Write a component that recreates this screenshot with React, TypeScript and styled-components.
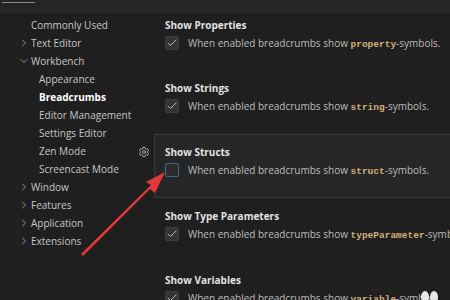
import React from "react";
import styled, { createGlobalStyle } from "styled-components";
import { ChevronRight, ChevronDown, Check, Settings } from "lucide-react";

const GlobalStyle = createGlobalStyle`
  html, body {
    margin: 0;
    padding: 0;
    background: #1e1e1e;
    overflow: hidden;
  }
  * { box-sizing: border-box; }
`;

interface TreeItem {
  label: string;
  depth: number;
  open?: boolean;
  leaf?: boolean;
  active?: boolean;
}

const tree: TreeItem[] = [
  { label: "Commonly Used", depth: 0, leaf: true },
  { label: "Text Editor", depth: 0 },
  { label: "Workbench", depth: 0, open: true },
  { label: "Appearance", depth: 1, leaf: true },
  { label: "Breadcrumbs", depth: 1, leaf: true, active: true },
  { label: "Editor Management", depth: 1, leaf: true },
  { label: "Settings Editor", depth: 1, leaf: true },
  { label: "Zen Mode", depth: 1, leaf: true },
  { label: "Screencast Mode", depth: 1, leaf: true },
  { label: "Window", depth: 0 },
  { label: "Features", depth: 0 },
  { label: "Application", depth: 0 },
  { label: "Extensions", depth: 0 },
];

interface Setting {
  title: string;
  symbol: string;
  checked: boolean;
}

const settings: Setting[] = [
  { title: "Show Properties", symbol: "property", checked: true },
  { title: "Show Strings", symbol: "string", checked: true },
  { title: "Show Structs", symbol: "struct", checked: false },
  { title: "Show Type Parameters", symbol: "typeParameter", checked: true },
  { title: "Show Variables", symbol: "variable", checked: true },
];

const App: React.FC = () => {
  return (
    <Page>
      <GlobalStyle />
      <TopBar>
        <TabLine />
      </TopBar>
      <Main>
        <Sidebar>
          {tree.map((item) => (
            <TreeRow key={item.label} depth={item.depth} active={item.active}>
              <Twistie>
                {item.leaf ? null : item.open ? (
                  <ChevronDown size={12} strokeWidth={1.5} />
                ) : (
                  <ChevronRight size={12} strokeWidth={1.5} />
                )}
              </Twistie>
              {item.label}
            </TreeRow>
          ))}
        </Sidebar>
        <Content>
          {settings.map((s, index) => {
            const selected = s.title === "Show Structs";
            return (
              <Section key={s.title} first={index === 0}>
                <Gutter>{selected && <Settings size={12} strokeWidth={1.6} />}</Gutter>
                <SectionBody selected={selected} first={index === 0}>
                  <Title>{s.title}</Title>
                  <Row>
                    <Checkbox checked={s.checked} focused={selected}>
                      {s.checked && <Check size={12} strokeWidth={1.6} />}
                    </Checkbox>
                    <Description>
                      When enabled breadcrumbs show <Code>{s.symbol}</Code>-symbols.
                    </Description>
                  </Row>
                </SectionBody>
              </Section>
            );
          })}
        </Content>
      </Main>
      <Arrow viewBox="0 0 450 300" width={450} height={300}>
        <polygon points="81,254 83,256 150,189 155,193 165,172 146,182 151,185" fill="#e23a3a" />
      </Arrow>
      <Blob style={{ left: 421 }} />
      <Blob style={{ left: 430 }} />
    </Page>
  );
};

export default App;

const Page = styled.div`
  position: relative;
  width: 450px;
  height: 300px;
  overflow: hidden;
  background: #1f1f1f;
  font-family: "Open Sans", "Noto Sans", sans-serif;
  font-size: 10px;
  color: #c8c8c8;
`;

const TopBar = styled.div`
  height: 15px;
  background: #252526;
  border-bottom: 1px solid #181818;
  padding: 2px 0 0 2px;
`;

const TabLine = styled.div`
  width: 33px;
  height: 1px;
  background: #8a8a8a;
`;

const Main = styled.div`
  display: flex;
`;

const Sidebar = styled.div`
  width: 132px;
  flex-shrink: 0;
  padding-top: 1px;
  white-space: nowrap;
`;

const TreeRow = styled.div<{ depth: number; active?: boolean }>`
  display: flex;
  align-items: center;
  height: 18px;
  padding-left: ${(p) => (p.depth === 0 ? 18 : 26)}px;
  color: ${(p) => (p.active ? "#ffffff" : "#c6c6c6")};
  font-weight: ${(p) => (p.active ? 700 : 400)};
`;

const Twistie = styled.span`
  display: flex;
  align-items: center;
  width: 13px;
  flex-shrink: 0;
  color: #b5b5b5;
`;

const Content = styled.div`
  flex: 1;
  min-width: 0;
`;

const Section = styled.div<{ first?: boolean }>`
  display: flex;
  height: ${(p) => (p.first ? 55 : 64)}px;
`;

const Gutter = styled.div`
  width: 22px;
  flex-shrink: 0;
  display: flex;
  justify-content: center;
  padding: 12px 0 0 2px;
  color: #c5c5c5;
`;

const SectionBody = styled.div<{ selected?: boolean; first?: boolean }>`
  flex: 1;
  padding: ${(p) => (p.first ? 1 : 9)}px 0 0 10px;
  background: ${(p) => (p.selected ? "#262626" : "transparent")};
  border: 1px solid ${(p) => (p.selected ? "#3a3a3a" : "transparent")};
  border-right: none;
  white-space: nowrap;
`;

const Title = styled.div`
  font-weight: 700;
  color: #e2e2e2;
  line-height: 16px;
`;

const Row = styled.div`
  display: flex;
  align-items: center;
  margin-top: 2px;
  height: 16px;
`;

const Checkbox = styled.div<{ checked: boolean; focused?: boolean }>`
  width: 14px;
  height: 14px;
  margin-right: 9px;
  flex-shrink: 0;
  display: flex;
  align-items: center;
  justify-content: center;
  border-radius: 2px;
  background: ${(p) => (p.checked ? "#343434" : "#2c2c2c")};
  border: 1px solid ${(p) => (p.focused ? "#3d6a8c" : "#3e3e3e")};
  color: #d8d8d8;
`;

const Description = styled.span`
  color: #bdbdbd;
`;

const Code = styled.span`
  font-family: "Liberation Mono", "DejaVu Sans Mono", monospace;
  font-size: 9.5px;
  font-weight: 700;
  color: #cfb07a;
`;

const Arrow = styled.svg`
  position: absolute;
  left: 0;
  top: 0;
  pointer-events: none;
`;

const Blob = styled.div`
  position: absolute;
  top: 291px;
  width: 8px;
  height: 12px;
  border-radius: 50%;
  background: #e8e8e8;
`;
